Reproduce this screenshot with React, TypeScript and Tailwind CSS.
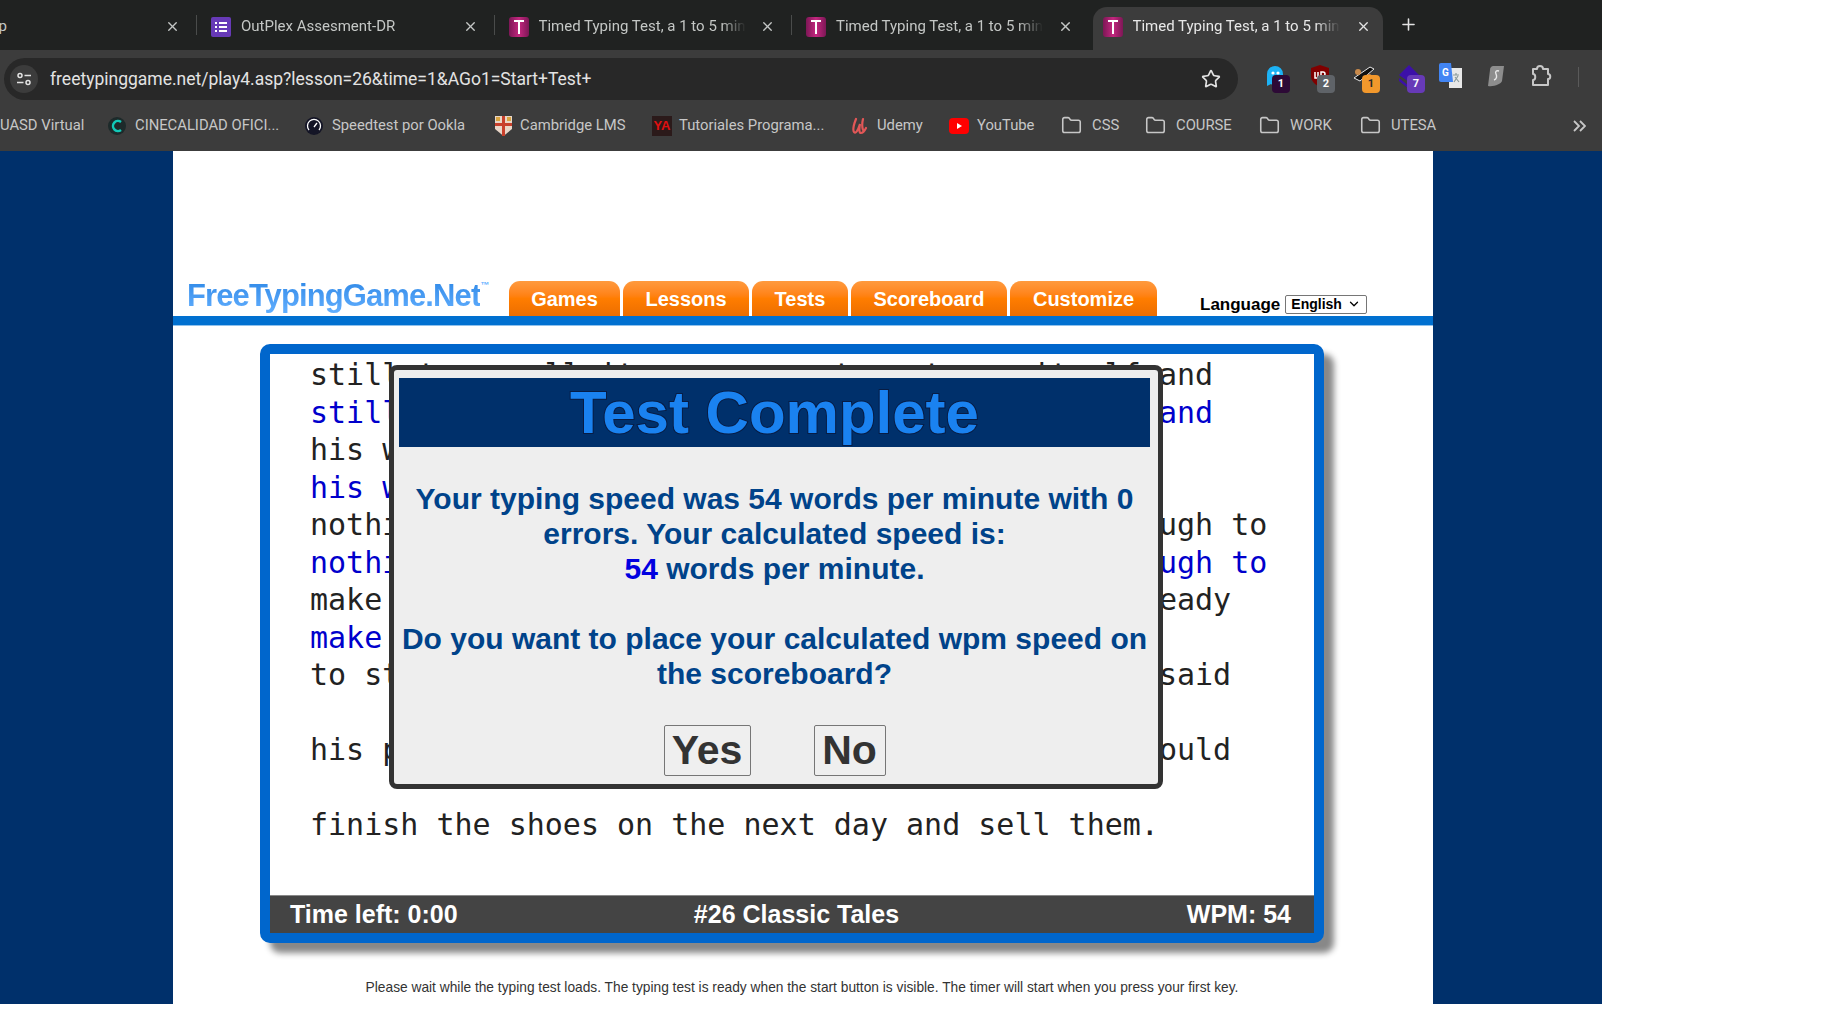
import { ChevronDown, Folder, Plus, Star, X } from 'lucide-react';

const sans = "font-['Liberation_Sans',Arial,sans-serif]";

function TypingFavicon() {
  return (
    <div className="w-5 h-5 shrink-0 rounded-[3px] bg-linear-to-r from-[#7d1756] via-[#c4277f] to-[#7d1756] flex items-center justify-center">
      <svg width="12" height="16" viewBox="0 0 12 16">
        <path d="M1 1h10v2H7v12H5V3H1z" fill="#fff" />
      </svg>
    </div>
  );
}

function FormsFavicon() {
  return (
    <div className="w-5 h-5 shrink-0 rounded-[2px] bg-[#673ab7] flex flex-col justify-center gap-[2px] px-1">
      {[0, 1, 2].map((i) => (
        <div key={i} className="flex gap-[2px]">
          <div className="w-[2px] h-[2px] bg-white" />
          <div className="w-2 h-[2px] bg-white" />
        </div>
      ))}
    </div>
  );
}

function Tab({ title, icon, active }: { title: string; icon: React.ReactNode; active?: boolean }) {
  return (
    <div
      className={
        active
          ? 'w-[290px] h-[43px] ml-[3px] pl-[10px] pr-[12px] pb-[4px] flex items-center rounded-t-[14px] bg-[#3c3c3c]'
          : 'w-[297.5px] h-[43px] pl-[14px] pr-[17px] pb-[4px] flex items-center'
      }
    >
      {icon}
      <span
        className={`ml-[10px] w-[207px] whitespace-nowrap overflow-hidden text-[15px] font-['Roboto',sans-serif] [mask-image:linear-gradient(to_right,black_88%,transparent)] ${
          active ? 'text-[#e8e8e8]' : 'text-[#c4c7c5]'
        }`}
      >
        {title}
      </span>
      <X size={15} strokeWidth={2.2} className={`ml-auto ${active ? 'text-[#e3e3e3]' : 'text-[#c4c7c5]'}`} />
    </div>
  );
}

function Separator() {
  return <div className="w-px h-[20px] mt-[15px] bg-[#4a4c4b] shrink-0 -mx-px" />;
}

function TabStrip() {
  const title = 'Timed Typing Test, a 1 to 5 minute typing test';
  return (
    <div className="h-[50px] bg-[#202221] flex items-start pt-[7px] text-white">
      <div className="w-[197px] h-[43px] pr-[17px] pb-[4px] flex items-center justify-between text-[15px] text-[#c4c7c5] font-['Roboto',sans-serif]">
        <span className="-ml-[10px]">pp</span>
        <X size={15} strokeWidth={2.2} />
      </div>
      <div className="-mt-[7px] flex items-start">
        <Separator />
      </div>
      <Tab title="OutPlex Assesment-DR" icon={<FormsFavicon />} />
      <div className="-mt-[7px] flex items-start">
        <Separator />
      </div>
      <Tab title={title} icon={<TypingFavicon />} />
      <div className="-mt-[7px] flex items-start">
        <Separator />
      </div>
      <Tab title={title} icon={<TypingFavicon />} />
      <Tab title={title} icon={<TypingFavicon />} active />
      <Plus size={19} strokeWidth={2} className="ml-[16px] mt-[8px] text-[#e3e3e3]" />
    </div>
  );
}

function Badge({ n, color }: { n: number; color: string }) {
  return (
    <div
      className={`absolute left-[10px] top-[11px] w-[18px] h-[18px] rounded-[4px] flex items-center justify-center text-[11px] font-bold text-white font-['Roboto',sans-serif] ${color}`}
    >
      {n}
    </div>
  );
}

function ExtIcon({ children }: { children: React.ReactNode }) {
  return <div className="relative w-[45px] h-[30px] shrink-0">{children}</div>;
}

function Toolbar() {
  return (
    <div className="h-[50px] bg-[#3c3c3c] flex items-center pt-[8px]">
      <div className="ml-[4px] w-[1234px] h-[42px] rounded-full bg-[#282828] flex items-center pr-[17px]">
        <div className="ml-[6px] w-7 h-7 rounded-full bg-[#3c3c3c] flex items-center justify-center">
          <svg width="16" height="16" viewBox="0 0 16 16" fill="none" stroke="#e3e3e3" strokeWidth="1.5">
            <circle cx="4" cy="4.5" r="2" />
            <path d="M8.5 4.5H15M1 11.5h6.500" />
            <circle cx="12" cy="11.5" r="2" />
          </svg>
        </div>
        <span className="ml-[12px] text-[17.5px] text-[#e3e3e3] font-['Roboto',sans-serif]">
          freetypinggame.net/play4.asp?lesson=26&amp;time=1&amp;AGo1=Start+Test+
        </span>
        <Star size={20} strokeWidth={2} className="ml-auto text-[#e3e3e3]" />
      </div>
      <div className="ml-[24px] flex items-center">
        <ExtIcon>
          <svg className="ml-[3px]" width="20" height="26" viewBox="0 0 20 26">
            <path d="M2 10a8 8 0 0 1 16 0v12l-4-2-4 3-4-3-4 2z" fill="#1cb2f5" />
            <circle cx="8" cy="9" r="1.6" fill="#fff" />
            <circle cx="13" cy="9" r="1.6" fill="#fff" />
          </svg>
          <Badge n={1} color="bg-[#2d0a36]" />
        </ExtIcon>
        <ExtIcon>
          <svg className="ml-[3px]" width="20" height="24" viewBox="0 0 20 24">
            <path d="M10 1l9 3v8c0 6-5 9-9 11-4-2-9-5-9-11V4z" fill="#800000" />
            <path d="M5 8v6h3V8M11 14V8h2a2 2 0 0 1 0 4h-2" fill="none" stroke="#fff" strokeWidth="1.5" />
          </svg>
          <Badge n={2} color="bg-[#5f6368]" />
        </ExtIcon>
        <ExtIcon>
          <svg width="24" height="22" viewBox="0 0 24 22">
            <path d="M2 14L18 3l4 2L8 17z" fill="#111" stroke="#e8e8e8" strokeWidth="1" />
            <circle cx="6" cy="8" r="3" fill="#c98a4b" />
            <circle cx="17" cy="13" r="3" fill="#c98a4b" />
          </svg>
          <Badge n={1} color="bg-[#f2982c] !text-[#2a2a2a]" />
        </ExtIcon>
        <ExtIcon>
          <svg width="24" height="26" viewBox="0 0 24 26">
            <path d="M12 1l10 10-10 7L2 11z" fill="#3c10a8" />
            <path d="M2 14l10 8 8-5v3l-8 5-10-8z" fill="#3c10a8" />
          </svg>
          <Badge n={7} color="bg-[#673ab7]" />
        </ExtIcon>
        <ExtIcon>
          <svg className="-ml-[3px] -mt-[1px]" width="24" height="26" viewBox="0 0 24 26">
            <rect x="10" y="5" width="13" height="20" fill="#e8e8e8" />
            <path d="M14 12h6M17 10v2M15 19l4-6M16 14l4 5" stroke="#8a9a9a" strokeWidth="1.2" fill="none" />
            <path d="M2 0h10l2 19H2a2 2 0 0 1-2-2V2a2 2 0 0 1 2-2z" fill="#4285f4" />
            <text x="3" y="13" fontSize="10" fontWeight="700" fill="#fff" fontFamily="Roboto, sans-serif">
              G
            </text>
          </svg>
        </ExtIcon>
        <ExtIcon>
          <svg className="ml-[1px] mt-[1px]" width="16" height="22" viewBox="0 0 16 22">
            <path d="M5 1h11l-2 15c-1 3-8 6-14 5l2-16a4 4 0 0 1 3-4z" fill="#8d8d8d" />
            <path d="M11 6c-3-1-4 1-3 3s1 5-2 6" fill="none" stroke="#e8e8e8" strokeWidth="1.4" />
          </svg>
        </ExtIcon>
        <ExtIcon>
          <svg className="-ml-[2px]" width="22" height="24" viewBox="0 0 22 24" fill="none" stroke="#c7c7c7" strokeWidth="2">
            <path d="M3 5h4c0-4 6-4 6 0h5v5c3 0 3 5 0 5v6H3v-5c3 0 3-6 0-6z" strokeLinejoin="round" />
          </svg>
        </ExtIcon>
        <div className="w-px h-[20px] mb-[4px] ml-[1px] bg-[#5a5a5a]" />
      </div>
    </div>
  );
}

function BookmarkItem({ label, icon, className }: { label: string; icon?: React.ReactNode; className: string }) {
  return (
    <div className={`flex items-center shrink-0 ${className}`}>
      {icon}
      <span className="whitespace-nowrap text-[14.8px] text-[#c7c7c7] font-['Roboto',sans-serif]">{label}</span>
    </div>
  );
}

function BookmarkFolder() {
  return <Folder size={21} strokeWidth={1.8} className="text-[#c7c7c7] mr-[10px]" />;
}

function Bookmarks() {
  return (
    <div className="h-[51px] bg-[#3c3c3c] flex items-center">
      <BookmarkItem className="w-[108px]" label="UASD Virtual" />
      <BookmarkItem
        className="w-[197px]"
        label="CINECALIDAD OFICI..."
        icon={
          <svg className="mr-[9px]" width="18" height="20" viewBox="0 0 18 20">
            <circle cx="9" cy="10" r="9" fill="#1d2a2a" />
            <path d="M13 6a5 5 0 1 0 0 8" fill="none" stroke="#12c9b8" strokeWidth="2.5" />
          </svg>
        }
      />
      <BookmarkItem
        className="w-[190px]"
        label="Speedtest por Ookla"
        icon={
          <svg className="mr-[9px]" width="18" height="18" viewBox="0 0 18 18">
            <circle cx="9" cy="9" r="9" fill="#141526" />
            <path d="M4 13a6.500 6.500 0 1 1 10 0M9 10l3-4" fill="none" stroke="#fff" strokeWidth="1.3" />
          </svg>
        }
      />
      <BookmarkItem
        className="w-[157px]"
        label="Cambridge LMS"
        icon={
          <svg className="mr-[8px]" width="17" height="20" viewBox="0 0 17 20">
            <path d="M0 0h17v13l-8.500 7L0 13z" fill="#e9d6c8" />
            <path d="M7 0h3v20H7zM0 7h17v3H0z" fill="#c8402c" />
            <path d="M1 1h4v4H1zM12 1h4v4h-4z" fill="#d9a441" />
          </svg>
        }
      />
      <BookmarkItem
        className="w-[199px]"
        label="Tutoriales Programa..."
        icon={
          <div className="w-5 h-5 mr-[7px] bg-[#2b1a1a] flex items-center justify-center text-[13px] leading-none font-bold text-[#e01010] font-['Liberation_Sans',sans-serif]">
            YA
          </div>
        }
      />
      <BookmarkItem
        className="w-[98px]"
        label="Udemy"
        icon={
          <svg className="mr-[8px]" width="18" height="20" viewBox="0 0 18 20">
            <path d="M5 3C3 8 1 13 3 16c2 2 4-2 6-8-1 5-1 9 1 9s4-3 5-5M12 3c-1 4-1 8 0 11" fill="none" stroke="#e25757" strokeWidth="2.2" strokeLinecap="round" />
          </svg>
        }
      />
      <BookmarkItem
        className="w-[112px]"
        label="YouTube"
        icon={
          <svg className="mr-[8px]" width="20" height="20" viewBox="0 0 20 20">
            <rect y="2" width="20" height="16" rx="4" fill="#f00" />
            <path d="M8 7l5 3-5 3z" fill="#fff" />
          </svg>
        }
      />
      <BookmarkItem className="w-[84px]" label="CSS" icon={<BookmarkFolder />} />
      <BookmarkItem className="w-[114px]" label="COURSE" icon={<BookmarkFolder />} />
      <BookmarkItem className="w-[101px]" label="WORK" icon={<BookmarkFolder />} />
      <BookmarkItem className="w-[212px]" label="UTESA" icon={<BookmarkFolder />} />
      <svg width="14" height="14" viewBox="0 0 14 14" fill="none" stroke="#c7c7c7" strokeWidth="1.8">
        <path d="M2 2l5 5-5 5M8 2l5 5-5 5" />
      </svg>
    </div>
  );
}

const typingLines: { text: string; typed?: boolean }[] = [
  { text: 'still to resell it a new one to get sum itself and' },
  { text: 'still to resell it a new one to get sum itself and', typed: true },
  { text: 'his work was done, there was no more' },
  { text: 'his work was done, there was no more', typed: true },
  { text: 'nothing left but one piece of leather, just enough to' },
  { text: 'nothing left but one piece of leather, just enough to', typed: true },
  { text: 'make one pair of shoes. He cut them out, then ready' },
  { text: 'make', typed: true },
  { text: 'to start work in the morning. Then he solemnly said' },
  { text: '\u00a0' },
  { text: 'his prayers and went to bed, trusting that he could' },
  { text: '\u00a0' },
  { text: 'finish the shoes on the next day and sell them.' },
];

function CompleteModal() {
  return (
    <div className={`absolute left-[119px] top-[11px] w-[774px] h-[424px] rounded-[8px] border-[5px] border-[#333] bg-[#eee] pl-[5px] pr-[8px] pt-[8px] ${sans}`}>
      <div className="h-[69px] bg-[#00306b] flex items-center justify-center">
        <h1 className="text-[60px] leading-none font-bold text-[#1a82f0] [-webkit-text-stroke:2px_#071c44] [paint-order:stroke_fill]">Test Complete</h1>
      </div>
      <div className="mt-[34px] text-center text-[30px] leading-[35px] font-bold text-[#00438a]">
        <p>
          Your typing speed was 54 words per minute with 0
          <br />
          errors. Your calculated speed is:
          <br />
          <span className="text-[#0000e0]">54</span> words per minute.
        </p>
        <p className="mt-[35px]">
          Do you want to place your calculated wpm speed on
          <br />
          the scoreboard?
        </p>
      </div>
      <div className="mt-[34px] flex justify-center gap-[63px]">
        <button className="w-[87px] h-[51px] p-0 bg-[#efefef] border border-[#767676] rounded-[2px] text-[41px] leading-none font-bold text-[#333]">Yes</button>
        <button className="w-[72px] h-[51px] p-0 bg-[#efefef] border border-[#767676] rounded-[2px] text-[41px] leading-none font-bold text-[#333]">No</button>
      </div>
    </div>
  );
}

function Page() {
  const navItems = [
    { label: 'Games', w: 'w-[111px]' },
    { label: 'Lessons', w: 'w-[126px]' },
    { label: 'Tests', w: 'w-[96px]' },
    { label: 'Scoreboard', w: 'w-[156px]' },
    { label: 'Customize', w: 'w-[147px]' },
  ];

  return (
    <div className="h-[853px] bg-[#00306b] pl-[173px] overflow-hidden">
      <div className={`w-[1260px] h-full bg-white flex flex-col ${sans}`}>
        <div className="h-[165px] shrink-0 flex items-end pl-[14px]">
          <div className="w-[322px] h-[38px] flex items-start">
            <span className="text-[31px] leading-[36px] font-bold tracking-[-0.9px] bg-linear-to-b from-[#2b87e6] to-[#63b0ff] bg-clip-text text-transparent">
              FreeTypingGame.Net
            </span>
            <span className="text-[9px] font-bold text-[#63b0ff] leading-[14px]">™</span>
          </div>
          <div className="flex gap-[3px]">
            {navItems.map((item) => (
              <div
                key={item.label}
                className={`${item.w} h-[35px] rounded-t-[11px] bg-linear-to-b from-[#ff9a3d] via-[#ff7d00] to-[#ec6e00] flex items-center justify-center text-[20px] font-bold text-white`}
              >
                {item.label}
              </div>
            ))}
          </div>
          <div className="ml-[43px] -mb-[1px] flex items-center gap-[5px]">
            <span className="text-[17px] font-bold text-black">Language</span>
            <div className="w-[82px] h-[19px] pl-[5px] pr-[5px] rounded-[2px] border border-[#767676] bg-white flex items-center justify-between text-[14px] font-bold text-black">
              English
              <ChevronDown size={14} strokeWidth={2.2} />
            </div>
          </div>
        </div>
        <div className="h-[10px] shrink-0 bg-[#0070d0] border-b border-[#8fc1ec]" />

        <div className="relative ml-[87px] mt-[18px] w-[1064px] h-[599px] shrink-0 border-[10px] border-[#0066cc] rounded-[10px] bg-white shadow-[10px_10px_6px_#888] flex flex-col">
          <div className="flex-1 pl-[40px] pt-[2px] font-['DejaVu_Sans_Mono',monospace] text-[30px] leading-[37.5px] whitespace-pre">
            {typingLines.map((line, i) => (
              <div key={i} className={line.typed ? 'text-[#0000cc]' : 'text-[#222]'}>
                {line.text}
              </div>
            ))}
          </div>
          <div className="h-[38px] shrink-0 bg-[#444] border-t border-[#888] grid grid-cols-3 items-center pl-[20px] pr-[23px] text-[25px] font-bold text-white">
            <span>Time left: 0:00</span>
            <span className="text-center pl-[12px]">#26 Classic Tales</span>
            <span className="text-right">WPM: 54</span>
          </div>
          <CompleteModal />
        </div>

        <p className="mt-[35px] text-center text-[13.75px] text-[#333] pr-[2px]">
          Please wait while the typing test loads. The typing test is ready when the start button is visible. The timer will start when you press your first key.
        </p>
      </div>
    </div>
  );
}

export default function App() {
  return (
    <div className="w-[1848px] h-[1028px] bg-white overflow-hidden">
      <div className="w-[1602px]">
        <TabStrip />
        <Toolbar />
        <Bookmarks />
        <Page />
      </div>
    </div>
  );
}
